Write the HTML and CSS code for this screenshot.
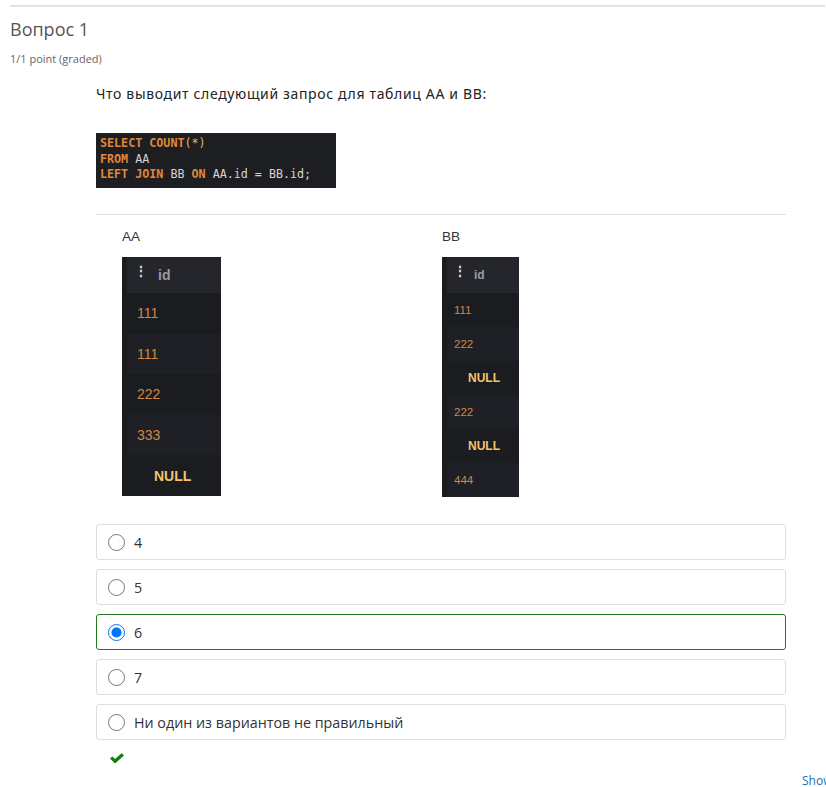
FILE: index.html
```html
<!DOCTYPE html>
<html lang="ru">
<head>
<meta charset="utf-8">
<title>Вопрос 1</title>
<link rel="stylesheet" href="styles.css">
</head>
<body>
<div class="page">
  <div class="rule"></div>
  <h2 class="title">Вопрос 1</h2>
  <div class="meta">1/1 point (graded)</div>
  <div class="problem">
    <p class="question">Что выводит следующий запрос для таблиц АА и ВВ:</p>
    <div class="code">
      <div><span class="kw">SELECT</span> <span class="kw">COUNT</span><span class="paren">(*)</span></div>
      <div><span class="kw">FROM</span> AA</div>
      <div><span class="kw">LEFT</span> <span class="kw">JOIN</span> BB <span class="kw">ON</span> AA.id = BB.id;</div>
    </div>
    <div class="sep"></div>
    <div class="tables">
      <div class="tcol tcol-aa">
        <div class="tlabel">AA</div>
        <div class="tbl tbl-aa">
          <div class="thead"><span class="dots">⋮</span><span class="hid">id</span></div>
          <div class="row">111</div>
          <div class="row alt">111</div>
          <div class="row">222</div>
          <div class="row alt">333</div>
          <div class="row null">NULL</div>
        </div>
      </div>
      <div class="tcol">
        <div class="tlabel">BB</div>
        <div class="tbl tbl-bb">
          <div class="thead"><span class="dots">⋮</span><span class="hid">id</span></div>
          <div class="row">111</div>
          <div class="row alt">222</div>
          <div class="row null">NULL</div>
          <div class="row alt">222</div>
          <div class="row null">NULL</div>
          <div class="row alt">444</div>
        </div>
      </div>
    </div>
    <div class="options">
      <label class="opt"><input type="radio" name="q1"><span>4</span></label>
      <label class="opt"><input type="radio" name="q1"><span>5</span></label>
      <label class="opt opt-correct"><input type="radio" name="q1" checked><span>6</span></label>
      <label class="opt"><input type="radio" name="q1"><span>7</span></label>
      <label class="opt"><input type="radio" name="q1"><span>Ни один из вариантов не правильный</span></label>
    </div>
    <div class="status">
      <svg class="check" width="16" height="11" viewBox="0 0 16 11"><path d="M1 5.6 L3.4 3.4 L6 6 L12.6 0.2 L15 2.4 L6 10.4 Z" fill="#0f7d0f"/></svg>
    </div>
  </div>
  <div class="actions"><span class="show">Show answer</span></div>
</div>
</body>
</html>
```
FILE: styles.css
```css
html, body {
  margin: 0;
  padding: 0;
  overflow: hidden;
  background: #fff;
}
body {
  font-family: "Open Sans", "Liberation Sans", sans-serif;
  color: #333;
}
.page {
  padding: 5px 0 0 10px;
  width: 900px;
}
.rule {
  width: 815px;
  border-top: 2px solid #e2e2e2;
}
.title {
  margin: 10px 0 0;
  font-size: 18px;
  line-height: 24px;
  font-weight: 400;
  color: #555;
}
.meta {
  margin-top: 11px;
  font-size: 11px;
  line-height: 14px;
  color: #666;
}
.problem {
  margin-left: 86px;
  width: 690px;
}
.question {
  margin: 19px 0 0;
  font-family: "Noto Sans", sans-serif;
  font-size: 14px;
  line-height: 18px;
  color: #222;
  letter-spacing: 0.65px;
}
.code {
  margin-top: 30px;
  width: 232px;
  height: 49px;
  padding: 3px 4px;
  background: #1d1e22;
  font-family: "DejaVu Sans Mono", monospace;
  font-size: 11.7px;
  line-height: 15.5px;
  color: #d4d4d6;
}
.kw {
  color: #e0883a;
  font-weight: 700;
}
.paren {
  color: #e2b45a;
}
.sep {
  margin-top: 26px;
  border-top: 1px solid #dedede;
}
.tables {
  display: flex;
  padding-left: 26px;
  margin-top: 14px;
}
.tcol-aa {
  width: 320px;
}
.tlabel {
  font-family: "Liberation Sans", Arial, sans-serif;
  font-size: 13.5px;
  line-height: 16px;
  color: #333;
}
.tbl {
  margin-top: 12px;
  background: #1b1c20;
  padding-left: 5px;
  font-family: "Liberation Sans", Arial, sans-serif;
}
.tbl-aa { width: 94px; }
.tbl-bb { width: 72px; }
.thead {
  display: flex;
  align-items: center;
  background: #25262b;
  margin-top: 3px;
  height: 36px;
  color: #9a9ca4;
  font-weight: 700;
}
.tbl-aa .thead { font-size: 14px; }
.tbl-bb .thead { font-size: 12px; }
.dots {
  color: #e8e8e8;
  font-size: 12px;
  margin-left: 8px;
  margin-right: 6px;
  margin-top: -8px;
}
.tbl-aa .dots { margin-right: 11px; }
.tbl-bb .dots { margin-left: 7px; margin-right: 8px; }
.row {
  display: flex;
  align-items: center;
  color: #cf8745;
}
.row.alt { background: #1f2025; }
.tbl-aa .row {
  height: 40.6px;
  font-size: 14px;
  padding-left: 10px;
}
.tbl-bb .row {
  height: 34px;
  font-size: 11.5px;
  padding-left: 7px;
}
.row.null {
  color: #f2c46c;
  font-weight: 700;
}
.tbl-aa .row.null { padding-left: 27px; font-size: 14px; }
.tbl-bb .row.null { padding-left: 21px; font-size: 12px; }
.options {
  margin-top: 27px;
  display: flex;
  flex-direction: column;
  gap: 9px;
}
.opt {
  display: flex;
  align-items: center;
  height: 36px;
  box-sizing: border-box;
  border: 1px solid #dedede;
  border-radius: 3px;
  padding-left: 11px;
  font-size: 14.3px;
  color: #333;
}
.opt input {
  width: 17px;
  height: 17px;
  margin: 0 9px 0 0;
}
.opt-correct {
  border-color: #1f7a1f;
}
.status {
  margin-top: 13px;
  padding-left: 13px;
  height: 12px;
}
.check { display: block; }
.actions {
  margin-top: 3px;
  padding-left: 792px;
  white-space: nowrap;
}
.show {
  font-size: 12px;
  line-height: 16px;
  color: #1f6fb0;
}
```
